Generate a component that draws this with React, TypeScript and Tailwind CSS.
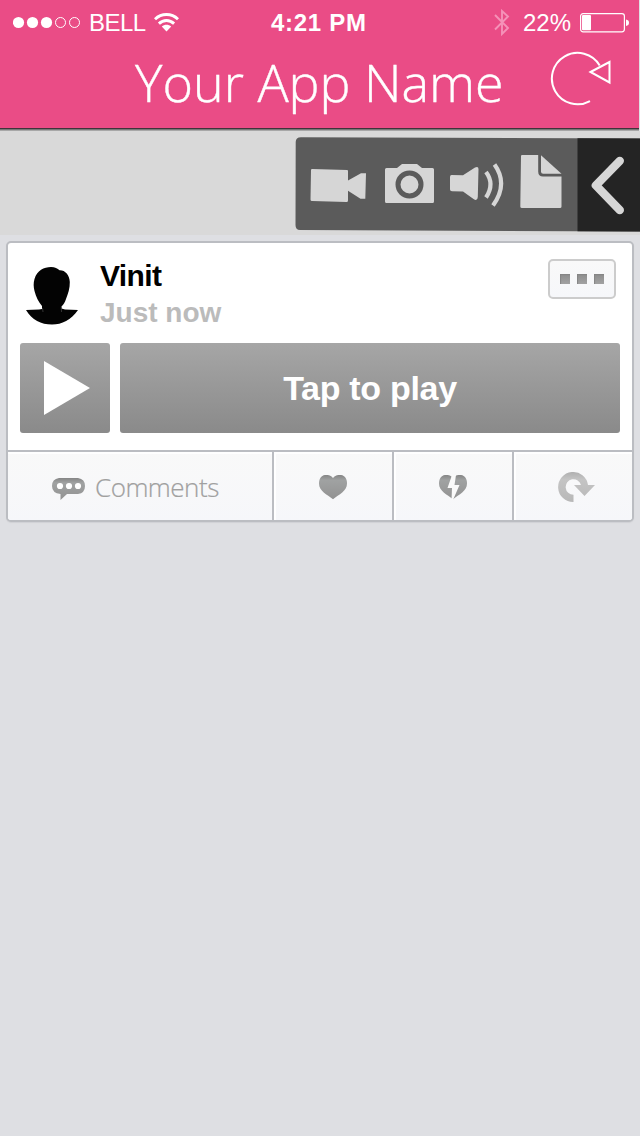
import type { ReactNode } from "react";

function StatusBar() {
  return (
    <div className="flex h-[46px] items-center font-['Liberation_Sans',sans-serif] text-white">
      <svg className="ml-[13px] w-[68px] shrink-0" height="14" viewBox="0 0 68 14">
        <circle cx="5.5" cy="6.5" r="5.6" fill="white" />
        <circle cx="19.5" cy="6.5" r="5.6" fill="white" />
        <circle cx="33.5" cy="6.5" r="5.6" fill="white" />
        <circle cx="47.5" cy="6.5" r="5" fill="none" stroke="white" />
        <circle cx="61.5" cy="6.5" r="5" fill="none" stroke="white" />
      </svg>
      <span className="ml-[8px] w-[58px] shrink-0 whitespace-nowrap text-[24px] leading-[46px] tracking-[-0.5px]">BELL</span>
      <svg className="ml-[7px] shrink-0" width="25" height="20" viewBox="0 0 25 20">
        <g fill="none" stroke="white" strokeWidth="2.9">
          <path d="M1 6.2C7.5 0 17.5 0 24 6.2" />
          <path d="M4.9 10.6C9.3 6.4 15.7 6.4 20.1 10.6" />
        </g>
        <path d="M7.8 13.5C10.5 11.2 14.5 11.2 17.2 13.5L12.5 18.5Z" fill="white" />
      </svg>
      <span className="ml-[92px] w-[98px] shrink-0 whitespace-nowrap text-[24px] font-bold leading-[46px] tracking-[0.7px]">4:21 PM</span>
      <svg className="ml-[125px] shrink-0" width="16" height="28" viewBox="0 0 16 28" fill="none" stroke="#f592b8" strokeWidth="1.9">
        <path d="M1 6L14 19L8 25V2L14 7.500L1 20.500" />
      </svg>
      <span className="ml-[13px] w-[50px] shrink-0 whitespace-nowrap text-[24px] leading-[46px]">22%</span>
      <svg className="ml-[7px] shrink-0" width="50" height="20" viewBox="0 0 50 20">
        <rect x=".6" y=".6" width="43.8" height="18.2" rx="2.5" fill="none" stroke="white" strokeWidth="1.2" />
        <rect x="2" y="2" width="9" height="15.3" rx="1" fill="white" />
        <path d="M46 6.5Q49 7 49 9.7T46 13Z" fill="white" />
      </svg>
    </div>
  );
}

function Header() {
  return (
    <header className="mr-px h-[131px] border-b border-[#a7a7a7] bg-[#ea4c86]">
      <div className="h-[130px] border-b border-[#777]">
        <div className="h-[129px] border-b border-[#3f343a]">
          <StatusBar />
          <div className="flex h-[82px] items-start">
            <h1 className="ml-[135px] mt-[-5px] w-[400px] whitespace-nowrap font-['Open_Sans',sans-serif] text-[52px] font-light leading-[82px] text-white [-webkit-text-stroke:0.4px_white]">Your App Name</h1>
            <svg className="ml-[15px] mt-[5px]" width="62" height="56" viewBox="0 0 62 56" fill="none" stroke="white" strokeWidth="2">
              <path d="M40 50.1A25.7 25.7 0 1 1 49.7 14.5" />
              <path d="M40.5 21L59.5 11V31.5Z" />
            </svg>
          </div>
        </div>
      </div>
    </header>
  );
}

function Toolbar() {
  return (
    <div className="flex h-[104px] justify-end bg-[#d9d9d9] pt-[6px]">
      <svg width="345" height="96" viewBox="0 0 345 96">
        <path d="M6 .2L345 1.5V94.6L5 93Q.5 93 .5 88L.7 5Q.7 .2 6 .2Z" fill="#5b5b5b" />
        <path d="M282.5 1.2L345 1.6V94.6L282.5 94.3Z" fill="#242424" />
        <g fill="#d6d6d6">
          <path d="M17 32L52 33Q53 33 53 34V43.5L66 36.3H71L70.3 61.8H65.5L53 53.8V63.5Q53 65 51.5 65L17 64Q15.5 64 15.5 62.5L16 33.2Q16 32 17 32Z" />
          <path d="M91.5 31H102L107 27H122L127 31H137.5Q139 31 139 32.5V64.5Q139 66 137.5 66H91.5Q90 66 90 64.5V32.5Q90 31 91.5 31Z" />
          <path d="M156.5 38L168 38.3L180 30.5Q183.5 29 183.5 32L182.8 60Q182.5 64.5 178.5 62L168 54.5L157 54.3Q155 54.3 155 52.5V40Q155 38 156.5 38Z" />
          <path d="M227 18H243.2V34.5Q243.2 39.5 248 39.5H266.5V69.5Q266.5 71 265 71H227Q225.3 71 225.3 69.5L226 19.2Q226 18 227 18Z" />
          <path d="M246 18.3L266.5 36.8H248.2Q246 36.8 246 34.5Z" />
        </g>
        <circle cx="114.5" cy="47.5" r="11.5" fill="none" stroke="#5b5b5b" strokeWidth="5" />
        <g fill="none" stroke="#d6d6d6" strokeWidth="4.2">
          <path d="M191 35Q200 47 191 60.5" />
          <path d="M199.5 27.5Q213.5 47 198 68.5" />
        </g>
        <path d="M324.8 23.9L300.9 48.4L324.8 73.1" fill="none" stroke="#d6d6d6" strokeWidth="8.4" strokeLinecap="round" strokeLinejoin="round" />
      </svg>
    </div>
  );
}

function Gradients() {
  return (
    <defs>
      <linearGradient id="iconGray" x1="0" y1="0" x2="0" y2="1">
        <stop offset="0" stopColor="#858585" />
        <stop offset=".22" stopColor="#a0a2a2" />
        <stop offset="1" stopColor="#929292" />
      </linearGradient>
      <linearGradient id="iconLight" x1="0" y1="0" x2="0" y2="1">
        <stop offset="0" stopColor="#b0b0b0" />
        <stop offset=".25" stopColor="#c4c4c4" />
        <stop offset="1" stopColor="#b8b8b8" />
      </linearGradient>
    </defs>
  );
}

const heart = "M14 3C16 -.2 20 0 22 0C26 .5 28 4 28 8.5C28 16 20 19.5 14 24.3C8 19.5 0 16 0 8.5C0 4 2 .5 6 0C8 0 12 -.2 14 3Z";

function Action({ children }: { children: ReactNode }) {
  return (
    <button className="flex items-start border-l-2 border-[#bbbdc2] bg-linear-to-b from-[#f9f9f9] to-[#f6f7fa] shadow-[inset_2px_2px_0_#fff]">
      {children}
    </button>
  );
}

function Post() {
  return (
    <article className="mx-[6px] mt-[6px] h-[281px] overflow-hidden rounded-[5px] border-2 border-[#bbbdc2] bg-white shadow-[0_1px_1px_#d0d1d5]">
      <div className="flex h-[100px]">
        <svg className="ml-[17px] mt-[23px] shrink-0" width="54" height="60" viewBox="0 0 54 60">
          <path d="M17 43V40C13.5 36 11 31 9.5 25C8.500 21 8.300 17 9.500 13C12 4.500 19 1 26 1C30 1 32.500 2.500 34.500 4.300C40 4 44.500 9 44.800 16C45 22 43 28 41 33C40 36 38.500 38.500 36.500 40.500V42.500L40 43.500L53 44C46 54 37 58.500 27 58.500C16 58.500 7 54 1 44L14 43.500Z" fill="#030303" />
          <path d="M17.500 42L18 46M36.300 41L36.500 46" stroke="#4b4b4b" strokeWidth=".7" />
        </svg>
        <div className="ml-[21px] mt-[14px] w-[300px] font-['Liberation_Sans',sans-serif] font-bold">
          <div className="text-[30px] leading-[37px] tracking-[-0.6px] text-black">Vinit</div>
          <div className="text-[28px] leading-[37px] text-[#bbb]">Just now</div>
        </div>
        <button className="ml-auto mr-[16px] mt-[16px] flex h-[40px] w-[68px] items-center justify-center gap-[7px] rounded-[5px] border-2 border-[#ccc] bg-linear-to-b from-[#f9f9f9] to-[#f6f7fa]">
          {[0, 1, 2].map((n) => (
            <span key={n} className="size-[10px] bg-linear-to-b from-[#8d8d8d] to-[#a2a2a2] shadow-[inset_1px_1px_1px_#858585]" />
          ))}
        </button>
      </div>
      <div className="flex h-[90px] gap-[10px] px-[12px]">
        <button className="flex w-[90px] rounded-[3px] bg-linear-to-b from-[#a6a6a6] to-[#8a8a8a]">
          <svg className="ml-[24px] mt-[18px]" width="46" height="54" viewBox="0 0 46 54">
            <path d="M0 0L46 27L0 54Z" fill="white" />
          </svg>
        </button>
        <button className="h-[90px] w-[500px] rounded-[3px] bg-linear-to-b from-[#a6a6a6] to-[#8a8a8a] font-['Liberation_Sans',sans-serif] text-[34px] font-bold leading-[90px] tracking-[-0.3px] text-white">
          Tap to play
        </button>
      </div>
      <div className="mt-[17px] grid h-[70px] grid-cols-[264px_120px_120px_120px] border-t-2 border-[#bbbdc2]">
        <button className="flex items-start bg-linear-to-b from-[#f9f9f9] to-[#f6f7fa] shadow-[inset_0_2px_0_#fff]">
          <svg className="ml-[44px] mt-[26px] shrink-0" width="34" height="23" viewBox="0 0 34 23">
            <Gradients />
            <path d="M7 0H26Q33 1 33 8Q33 15 26 16H15L8.5 22V16Q0 15 0 8Q0 1 7 0Z" fill="url(#iconGray)" />
            <g fill="white">
              <circle cx="8" cy="8" r="3.1" />
              <circle cx="17" cy="8" r="3.1" />
              <circle cx="26" cy="8" r="3.1" />
            </g>
          </svg>
          <span className="ml-[9px] whitespace-nowrap font-['Open_Sans',sans-serif] text-[26px] font-light leading-[71px] tracking-[-0.5px] text-[#a0a0a0] [-webkit-text-stroke:0.2px_#a0a0a0]">Comments</span>
        </button>
        <Action>
          <svg className="ml-[45px] mt-[23px]" width="28" height="25" viewBox="0 0 28 25">
            <path d={heart} fill="url(#iconGray)" />
          </svg>
        </Action>
        <Action>
          <svg className="ml-[45px] mt-[23px]" width="28" height="25" viewBox="0 0 28 25">
            <path d={heart} fill="url(#iconGray)" />
            <path d="M13 0L8.5 13H13L12.5 25H14L20.5 10H15.500L17 0Z" fill="#fafafa" />
          </svg>
        </Action>
        <Action>
          <svg className="ml-[44px] mt-[20px]" width="37" height="31" viewBox="0 0 37 31">
            <path d="M15.5 30V22.8A7.8 7.8 0 1 1 23 13H16L26.5 24L37 13H30A15 15 0 1 0 15.5 30Z" fill="url(#iconLight)" />
          </svg>
        </Action>
      </div>
    </article>
  );
}

export default function App() {
  return (
    <main className="h-[1136px] w-[640px] overflow-hidden bg-[#dedfe3]">
      <Header />
      <Toolbar />
      <Post />
    </main>
  );
}
